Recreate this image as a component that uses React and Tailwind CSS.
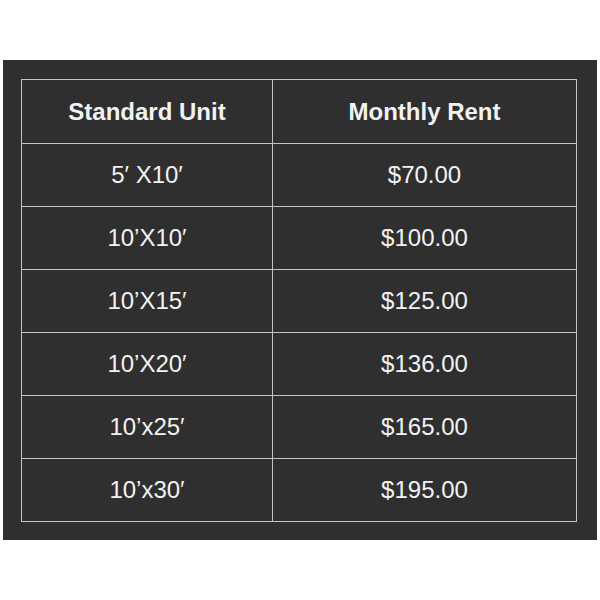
import React from "react";

const rows = [
  { unit: "5′ X10′", rent: "$70.00" },
  { unit: "10’X10′", rent: "$100.00" },
  { unit: "10’X15′", rent: "$125.00" },
  { unit: "10’X20′", rent: "$136.00" },
  { unit: "10’x25′", rent: "$165.00" },
  { unit: "10’x30′", rent: "$195.00" },
];

export default function App() {
  return (
    <div className="w-[600px] h-[600px] bg-white pt-[60px] font-['Liberation_Sans',Arial,sans-serif]">
      <div className="mx-[3px] bg-[#2f2f2f] pt-[19px] pb-[18px] pl-[18px] pr-[20px]">
        <table className="w-[556px] border-collapse text-[24px] text-[#f2f2f2]">
          <thead>
            <tr className="h-[64px]">
              <th className="w-[251px] border border-[#c4c4c4] font-bold text-center">
                Standard Unit
              </th>
              <th className="border border-[#c4c4c4] font-bold text-center">
                Monthly Rent
              </th>
            </tr>
          </thead>
          <tbody>
            {rows.map((r) => (
              <tr key={r.rent} className="h-[63px]">
                <td className="border border-[#c4c4c4] text-center">{r.unit}</td>
                <td className="border border-[#c4c4c4] text-center">{r.rent}</td>
              </tr>
            ))}
          </tbody>
        </table>
      </div>
    </div>
  );
}
